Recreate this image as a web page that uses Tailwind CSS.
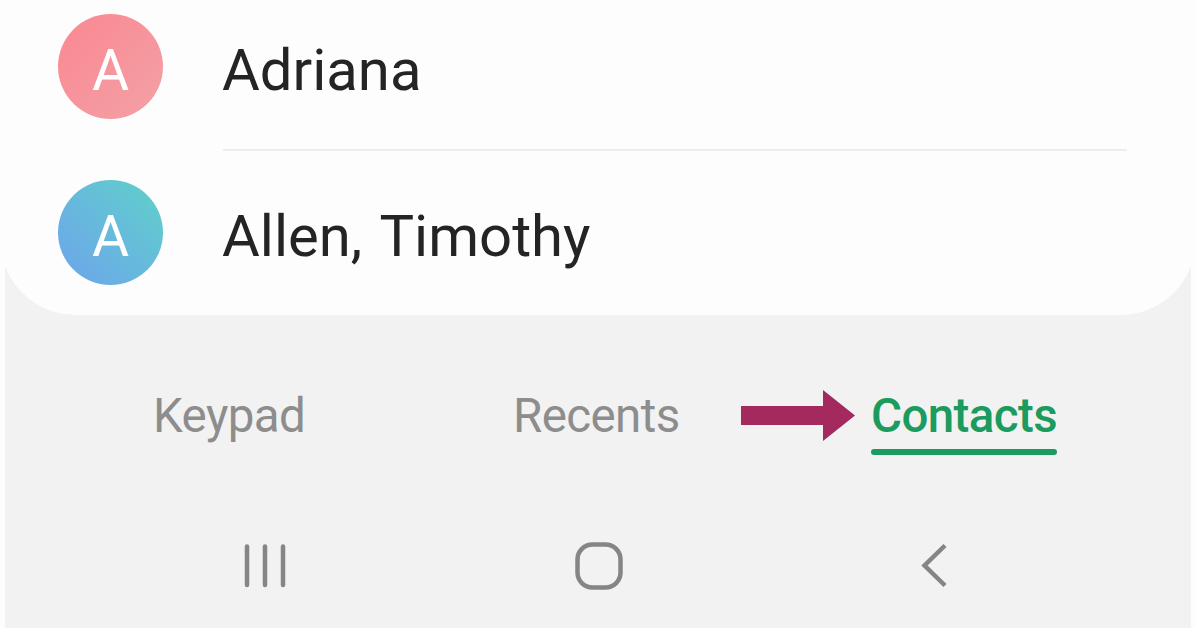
<!DOCTYPE html>
<html lang="en">
<head>
<meta charset="utf-8">
<title>Contacts</title>
<script src="https://cdn.jsdelivr.net/npm/@tailwindcss/browser@4"></script>
</head>
<body class="h-[628px] w-[1196px] overflow-hidden bg-[#fdfdfd] px-[5px] font-['Roboto',sans-serif]">
<div class="flex h-[628px] flex-col bg-[#f2f2f2]">
  <main class="-mx-[5px] h-[315px] rounded-b-[76px] bg-[#fdfdfd] pr-[69px] pl-[58px]">
    <div class="flex h-[149px] items-start gap-[60px] pt-[14px]">
      <div class="flex size-[105px] shrink-0 items-center justify-center rounded-full bg-linear-to-br from-[#fa8790] to-[#f3a1a7] pt-[8px] text-[57px] leading-[68px] text-white"><span>A</span></div>
      <div class="h-[137px] flex-1 border-b-2 border-[#ededed] pt-[22px]"><span class="-ml-[1px] block text-[58px] leading-[68px] text-[#242426]">Adriana</span></div>
    </div>
    <div class="flex items-start gap-[60px] pt-[31px]">
      <div class="flex size-[105px] shrink-0 items-center justify-center rounded-full bg-linear-to-tr from-[#6da3ec] to-[#5fd0c9] pt-[8px] text-[57px] leading-[68px] text-white"><span>A</span></div>
      <div class="pt-[22px]"><span class="-ml-[1px] block text-[58px] leading-[68px] text-[#242426] [word-spacing:4px]">Allen, Timothy</span></div>
    </div>
  </main>
  <nav class="flex h-[185px] items-start pt-[74px] pl-[148px] text-[47.5px] leading-[54px] tracking-[-0.6px] text-[#8d8d8d]">
    <span class="w-[360px]">Keypad</span>
    <span class="w-[228px]">Recents</span>
    <svg class="h-[52px] w-[114px]" viewBox="0 0 114 52" fill="#a4295f"><path d="M0 17H82V1L114 26.5L82 52V36H0Z"/></svg>
    <span class="ml-[16px] h-[68px] w-[186px] font-medium text-[#1b9b5d]">Contacts<i class="mt-[6px] block h-[6px] rounded-full bg-[#1b9b5d]"></i></span>
  </nav>
  <footer class="flex h-[128px] items-start pt-[42px] pl-[238px] text-[#858585]">
    <svg class="h-[48px] w-[44px]" viewBox="0 0 44 48" fill="none" stroke="currentColor" stroke-width="4.5" stroke-linecap="round"><path d="M4 4.5V43M22 4.5V43M40 4.5V43"/></svg>
    <svg class="ml-[287px] h-[48px] w-[50px]" viewBox="0 0 50 48" fill="none" stroke="currentColor" stroke-width="4.5"><rect x="3.5" y="2.5" width="43" height="43" rx="15"/></svg>
    <svg class="ml-[296px] h-[48px] w-[28px]" viewBox="0 0 28 48" fill="none" stroke="currentColor" stroke-width="4.5"><path d="M25 3.5L4.5 23.5L25 43.5"/></svg>
  </footer>
</div>
</body>
</html>
